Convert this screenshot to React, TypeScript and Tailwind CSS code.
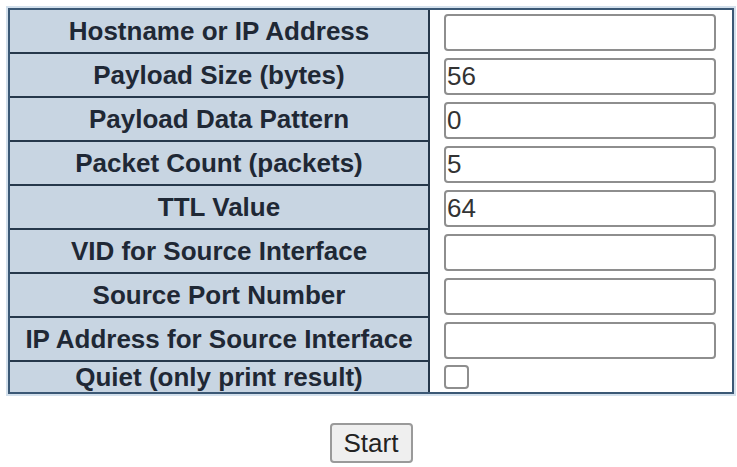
import { useState } from 'react';

type Field = { label: string; value: string };

const fields: Field[] = [
  { label: 'Hostname or IP Address', value: '' },
  { label: 'Payload Size (bytes)', value: '56' },
  { label: 'Payload Data Pattern', value: '0' },
  { label: 'Packet Count (packets)', value: '5' },
  { label: 'TTL Value', value: '64' },
  { label: 'VID for Source Interface', value: '' },
  { label: 'Source Port Number', value: '' },
  { label: 'IP Address for Source Interface', value: '' }
];

export default function App() {
  const [values, setValues] = useState(fields.map((f) => f.value));
  const [quiet, setQuiet] = useState(false);

  return (
    <div className="min-h-[467px] bg-white pl-[8px] pt-[8px] font-['Liberation_Sans',Arial,sans-serif]">
      <div className="w-[726px] border-2 border-[#3b5875] shadow-[0_0_0_2px_#d3e0ec]">
        {fields.map((field, i) => (
          <div key={field.label} className="flex">
            <div className="flex h-[44px] w-[420px] items-center justify-center border-b-2 border-r-2 border-[#26384b] bg-[#c8d5e2] text-[26px] font-bold leading-none text-[#1f2835]">
              {field.label}
            </div>
            <div className="flex h-[44px] flex-1 items-center bg-white pl-[14px]">
              <input
                className="h-[37px] w-[272px] rounded-[4px] border-2 border-[#8e8e8e] bg-white px-[1px] text-[26px] leading-none text-[#333] outline-none"
                value={values[i]}
                onChange={(event) => {
                  const next = [...values];
                  next[i] = event.target.value;
                  setValues(next);
                }}
              />
            </div>
          </div>
        ))}
        <div className="flex">
          <div className="flex h-[30px] w-[420px] items-center justify-center border-r-2 border-[#26384b] bg-[#c8d5e2] text-[26px] font-bold leading-none text-[#1f2835]">
            Quiet (only print result)
          </div>
          <div className="flex h-[30px] flex-1 items-center bg-white pl-[14px]">
            <button
              type="button"
              onClick={() => setQuiet(!quiet)}
              className="flex h-[24px] w-[25px] items-center justify-center rounded-[4px] border-2 border-[#8e8e8e] bg-white text-[16px] leading-none text-[#333]"
            >
              {quiet ? '✓' : ''}
            </button>
          </div>
        </div>
      </div>
      <div className="flex w-[726px] justify-center pt-[29px]">
        <button
          type="button"
          className="h-[40px] w-[83px] rounded-[4px] border-2 border-[#9a9a9a] bg-[#efefef] text-[26px] leading-none text-[#222]"
        >
          Start
        </button>
      </div>
    </div>
  );
}
